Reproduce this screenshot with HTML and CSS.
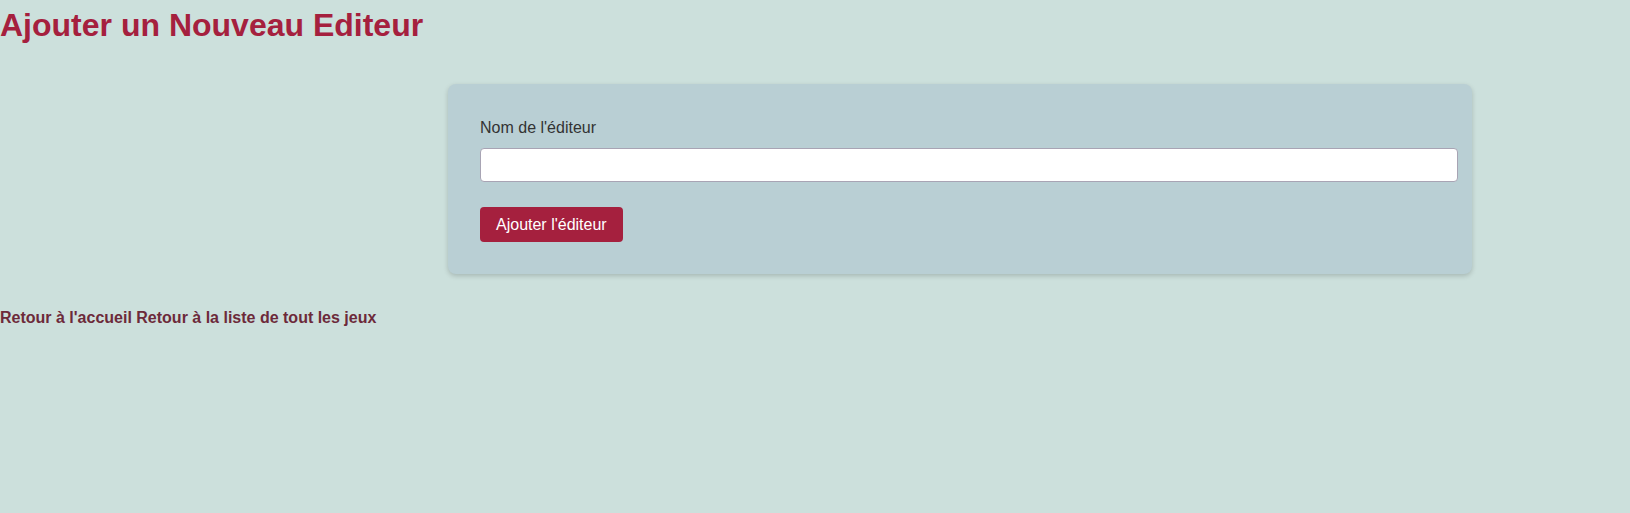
FILE: index.html
```html
<!DOCTYPE html>
<html lang="fr">
<head>
<meta charset="utf-8">
<title>Ajouter un Nouveau Editeur</title>
<link rel="stylesheet" href="styles.css">
</head>
<body>
<h1 class="title">Ajouter un Nouveau Editeur</h1>
<form class="card">
  <div class="field">
    <label class="label" for="nom">Nom de l'éditeur</label>
    <input class="input" type="text" id="nom" name="nom">
  </div>
  <button class="btn" type="submit">Ajouter l'éditeur</button>
</form>
<p class="links"><a class="link" href="#">Retour à l'accueil</a> <a class="link" href="#">Retour à la liste de tout les jeux</a></p>
</body>
</html>
```

FILE: styles.css
```css
html, body {
  margin: 0;
  padding: 0;
}
body {
  background: #cce0dc;
  font-family: "Liberation Sans", Arial, sans-serif;
  color: #333;
}
.title {
  margin: 7px 0 0;
  font-size: 32px;
  font-weight: bold;
  color: #a5203e;
  line-height: normal;
}
.card {
  box-sizing: border-box;
  width: 1024px;
  margin: 40px 0 0 448px;
  padding: 35px 32px 32px;
  background: #b9cfd4;
  border-radius: 8px;
  box-shadow: 0 2px 5px rgba(0, 0, 0, 0.18);
}
.field {
  margin-bottom: 25px;
}
.label {
  display: block;
  font-size: 16px;
  color: #333;
  margin-bottom: 11px;
}
.input {
  display: block;
  box-sizing: border-box;
  width: calc(100% + 18px);
  height: 34px;
  padding: 0 8px;
  border: 1px solid #a8a4b4;
  border-radius: 4px;
  background: #fff;
  font-family: "Liberation Sans", Arial, sans-serif;
  font-size: 13.333px;
  outline: none;
}
.btn {
  display: block;
  height: 35px;
  padding: 0 16px;
  border: none;
  border-radius: 4px;
  background: #a5203e;
  color: #fff;
  font-family: "Liberation Sans", Arial, sans-serif;
  font-size: 16px;
  cursor: pointer;
}
.links {
  margin: 35px 0 0;
  font-size: 16px;
  font-weight: bold;
}
.link {
  color: #6c2a3a;
  text-decoration: none;
}
```
